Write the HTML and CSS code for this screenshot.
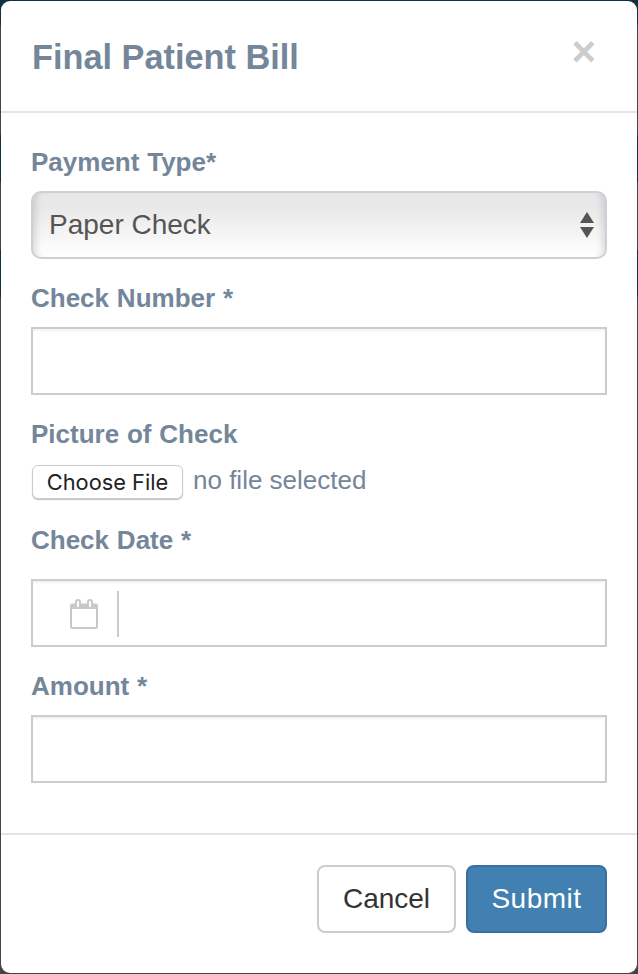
FILE: index.html

```html
<!DOCTYPE html>
<html lang="en">
<head>
  <meta charset="UTF-8" />
  <meta name="viewport" content="width=device-width, initial-scale=1.0"/>
  <title>Final Patient Bill</title>
  <link rel="stylesheet" href="styles.css">
</head>
<body>
  <div class="modal">
    <div class="modal-header">
      <h1>Final Patient Bill</h1>
      <button class="close" type="button">×</button>
    </div>

    <form class="modal-body">
      <label for="paymentType">Payment Type*</label>
      <div class="select-wrap">
        <select id="paymentType">
          <option>Paper Check</option>
          <option>Credit Card</option>
          <option>Cash</option>
        </select>
        <svg class="select-arrows" width="14" height="26" viewBox="0 0 14 26">
          <path d="M7 0L14 11H0Z" fill="#555"/>
          <path d="M0 15H14L7 26Z" fill="#555"/>
        </svg>
      </div>

      <label for="checkNumber">Check Number *</label>
      <input type="text" id="checkNumber" />

      <label class="file-label">Picture of Check</label>
      <div class="file-row">
        <button class="file-btn" type="button">Choose File</button>
        <span class="file-name">no file selected</span>
      </div>

      <label class="date-label" for="checkDate">Check Date *</label>
      <div class="date-input">
        <span class="date-addon">
          <svg width="28" height="30" viewBox="0 0 28 30" fill="none">
            <path d="M1 7A1.500 1.500 0 0 1 2.500 5.500H25.500A1.500 1.500 0 0 1 27 7V27.500A1.500 1.500 0 0 1 25.500 29H2.500A1.500 1.500 0 0 1 1 27.500Z" stroke="#c8c8c8" stroke-width="2"/>
            <path d="M1 5H27V10H1Z" fill="#c8c8c8"/>
            <rect x="6" y="1" width="4" height="8" rx="2" fill="#fff" stroke="#c8c8c8" stroke-width="2"/>
            <rect x="18" y="1" width="4" height="8" rx="2" fill="#fff" stroke="#c8c8c8" stroke-width="2"/>
          </svg>
        </span>
        <input type="text" id="checkDate" />
      </div>

      <label for="amount">Amount *</label>
      <input type="text" id="amount" />
    </form>

    <div class="modal-footer">
      <button class="btn" type="button">Cancel</button>
      <button class="btn btn-primary" type="button">Submit</button>
    </div>
  </div>
</body>
</html>
```

FILE: styles.css

```css
* { box-sizing: border-box; }
html, body { height: 100%; }
body {
  margin: 0;
  padding: 1px;
  font-family: "Liberation Sans", Arial, sans-serif;
  background: linear-gradient(#12303f 0 25px, #444 25px 135px, #12303f 135px 182px, #444 182px 250px, #12303f 250px 297px, #444 297px);
}

.modal {
  height: 972px;
  background: #fff;
  border-radius: 9px;
  overflow: hidden;
}

.modal-header {
  height: 112px;
  padding: 0 30px;
  border-bottom: 2px solid #e5e5e5;
  display: flex;
  align-items: center;
  justify-content: space-between;
}
.modal-header h1 {
  margin: 1px 0 0 1px;
  font-size: 34.300px;
  line-height: 40px;
  color: #748699;
}
.close {
  border: 0;
  padding: 0;
  margin: 0 11px 8px 0;
  background: none;
  font: bold 42px/40px "Liberation Sans", Arial, sans-serif;
  color: #ccc;
}

.modal-body {
  padding: 32px 30px 50px;
  display: flex;
  flex-direction: column;
}
label {
  display: block;
  height: 34px;
  margin-bottom: 12px;
  font-size: 26px;
  line-height: 34px;
  font-weight: bold;
  word-spacing: .6px;
  color: #748699;
}
.file-label { margin-bottom: 14px; }
.date-label { margin-bottom: 22px; }

input[type="text"] {
  display: block;
  width: 100%;
  height: 68px;
  margin-bottom: 22px;
  padding: 0 16px;
  font: 28px "Liberation Sans", Arial, sans-serif;
  border: 2px solid #ccc;
  background: #fff;
  box-shadow: inset 0 2px 2px rgba(0,0,0,.05);
  outline: none;
}

.select-wrap {
  position: relative;
  margin-bottom: 22px;
}
select {
  display: block;
  width: 100%;
  height: 68px;
  padding: 0 16px 2px;
  appearance: none;
  font: 28px "Liberation Sans", Arial, sans-serif;
  color: #555;
  border: 2px solid #ccd0d8;
  border-radius: 10px;
  background: linear-gradient(#e8e8e8 20%, #fff);
  box-shadow: inset 8px 0 6px -5px rgba(0,0,0,.12), inset -8px 0 6px -5px rgba(0,0,0,.12);
}
.select-arrows {
  position: absolute;
  right: 13px;
  top: 21px;
}

.file-row {
  display: flex;
  align-items: center;
  gap: 10px;
  height: 34px;
  margin-bottom: 24px;
}
.file-btn {
  width: 151px;
  height: 34px;
  margin-left: 1px;
  padding: 0;
  font: 21.800px Inter, sans-serif;
  color: #222;
  background: #fff;
  border: 1px solid #ccc;
  border-radius: 6px;
  box-shadow: 0 1px 1px rgba(0,0,0,.25);
}
.file-name {
  margin-top: -3px;
  font-size: 26px;
  color: #748699;
}

.date-input {
  display: flex;
  align-items: center;
  height: 68px;
  margin-bottom: 22px;
  border: 2px solid #ccc;
  box-shadow: inset 0 2px 2px rgba(0,0,0,.05);
}
.date-addon {
  display: flex;
  align-items: center;
  justify-content: flex-end;
  width: 86px;
  height: 46px;
  margin-top: 2px;
  padding-right: 19px;
  border-right: 2px solid #ccc;
}
.date-input input[type="text"] {
  flex: 1;
  height: 100%;
  margin: 0;
  border: 0;
  background: none;
  box-shadow: none;
}

.modal-body > :last-child { margin-bottom: 0; }

.modal-footer {
  display: flex;
  justify-content: flex-end;
  gap: 10px;
  padding: 30px 30px 40px;
  border-top: 2px solid #e5e5e5;
}
.btn {
  width: 139px;
  height: 68px;
  padding: 0;
  font: 28px "Liberation Sans", Arial, sans-serif;
  color: #333;
  background: #fff;
  border: 2px solid #ccc;
  border-radius: 8px;
}
.btn-primary {
  width: 141px;
  letter-spacing: .5px;
  color: #fff;
  background: #4180b1;
  border-color: #3a6fa3;
}
```
